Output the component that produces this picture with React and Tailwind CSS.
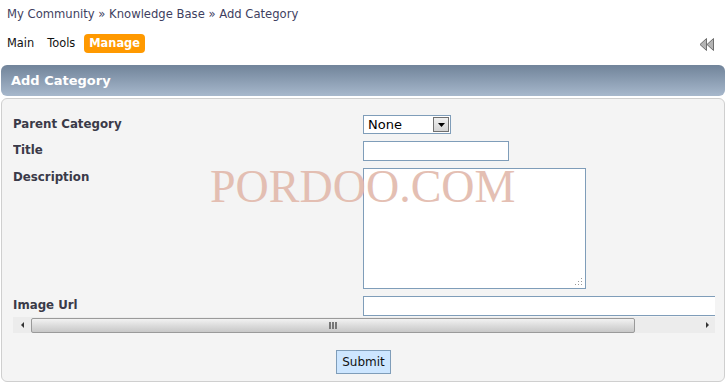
import React from "react";

const FIELDS = [
  { label: "Parent Category", kind: "select" },
  { label: "Title", kind: "input" },
  { label: "Description", kind: "textarea" },
  { label: "Image Url", kind: "wide" },
];

function RewindIcon() {
  return (
    <svg width="16" height="13" viewBox="0 0 16 13" aria-hidden="true">
      <polygon points="7.5,0.5 7.5,12.5 1,6.5" fill="#b4b4b4" stroke="#6e6e6e" />
      <polygon points="14.5,0.5 14.5,12.5 8,6.5" fill="#b4b4b4" stroke="#6e6e6e" />
    </svg>
  );
}

function SelectBox() {
  return (
    <div className="flex h-[19px] w-[88px] items-center border border-[#7f9db9] bg-white">
      <span className="flex-1 pl-[4px] text-[13px] leading-none text-black">None</span>
      <div className="m-[1px] flex h-[15px] w-[16px] items-center justify-center border border-[#707070] bg-gradient-to-b from-[#f0f0f0] to-[#d4d4d4]">
        <svg width="7" height="4" viewBox="0 0 7 4">
          <polygon points="0,0 7,0 3.5,4" fill="#000" />
        </svg>
      </div>
    </div>
  );
}

function Field({ kind }) {
  if (kind === "select") return <SelectBox />;
  if (kind === "input")
    return <div className="h-[20px] w-[146px] border border-[#7f9db9] bg-white" />;
  if (kind === "textarea")
    return (
      <div className="relative h-[121px] w-[223px] border border-[#7f9db9] bg-white">
        <svg className="absolute bottom-[2px] right-[2px]" width="8" height="8" viewBox="0 0 8 8">
          <rect x="6" y="0" width="1" height="1" fill="#999" />
          <rect x="3" y="3" width="1" height="1" fill="#999" />
          <rect x="6" y="3" width="1" height="1" fill="#999" />
          <rect x="0" y="6" width="1" height="1" fill="#999" />
          <rect x="3" y="6" width="1" height="1" fill="#999" />
          <rect x="6" y="6" width="1" height="1" fill="#999" />
        </svg>
      </div>
    );
  return <div className="h-[20px] w-[400px] border border-[#7f9db9] bg-white" />;
}

export default function App() {
  return (
    <div className="relative h-[384px] w-[726px] overflow-hidden bg-white font-['DejaVu_Sans',Verdana,sans-serif]">
      <div className="px-[7px] pt-[7px] text-[11.6px] leading-[14px] text-[#3f3f5f]">
        My Community » Knowledge Base » Add Category
      </div>

      <div className="mt-[13px] flex h-[19px] items-center pl-[7px] pr-[11px] text-[11.4px]">
        <span className="text-[#111]">Main</span>
        <span className="ml-[13px] text-[#111]">Tools</span>
        <span className="ml-[9px] flex h-[19px] items-center rounded-[4px] bg-[#ff9900] px-[5px] font-bold text-white">
          Manage
        </span>
        <span className="ml-auto pl-[1px] pt-[2px]">
          <RewindIcon />
        </span>
      </div>

      <div className="ml-[1px] mr-[1px] mt-[12px] flex h-[31px] items-center rounded-[6px] bg-gradient-to-b from-[#71849a] to-[#a7b8cc] pl-[10px] text-[13px] font-bold text-white">
        Add Category
      </div>

      <div className="mx-[1px] mt-[2px] h-[284px] rounded-[6px] border border-[#cfcfcf] bg-[#f4f4f4] pl-[11px] pr-[10px] pt-[16px]">
        <div className="w-[702px] overflow-hidden">
          <div className="grid grid-cols-[350px_1fr] gap-y-[7px]">
            {FIELDS.map((f) => (
              <React.Fragment key={f.label}>
                <div
                  className={`text-[11.8px] font-bold text-[#3a3a48] ${
                    f.kind === "textarea" ? "pt-[1px]" : "flex items-center"
                  }`}
                >
                  {f.label}
                </div>
                <Field kind={f.kind} />
              </React.Fragment>
            ))}
          </div>
        </div>

        <div className="mt-[1px] flex h-[16px] w-[702px] items-center bg-[#ececec]">
          <div className="flex w-[18px] justify-center">
            <svg width="3" height="6" viewBox="0 0 3 6">
              <polygon points="3,0 3,6 0,3" fill="#333" />
            </svg>
          </div>
          <div className="flex h-[15px] w-[604px] items-center justify-center rounded-[2px] border border-[#9a9a9a] bg-gradient-to-b from-[#f2f2f2] via-[#dcdcdc] to-[#c8c8c8]">
            <svg width="8" height="7" viewBox="0 0 8 7">
              <rect x="0" y="0" width="2" height="7" fill="#777" />
              <rect x="3" y="0" width="2" height="7" fill="#777" />
              <rect x="6" y="0" width="2" height="7" fill="#777" />
            </svg>
          </div>
          <div className="flex flex-1 justify-end pr-[6px]">
            <svg width="3" height="6" viewBox="0 0 3 6">
              <polygon points="0,0 0,6 3,3" fill="#333" />
            </svg>
          </div>
        </div>

        <div className="mt-[17px] flex justify-center">
          <div className="flex h-[24px] w-[55px] items-center justify-center border border-[#7f9db9] bg-[#cde6ff] text-[12px] text-[#111]">
            Submit
          </div>
        </div>
      </div>

      <div className="pointer-events-none absolute left-[210px] top-[162px] font-['Liberation_Serif',serif] text-[46px] leading-[50px] text-[#e2b9ab] opacity-90">
        PORDOO.COM
      </div>
    </div>
  );
}
